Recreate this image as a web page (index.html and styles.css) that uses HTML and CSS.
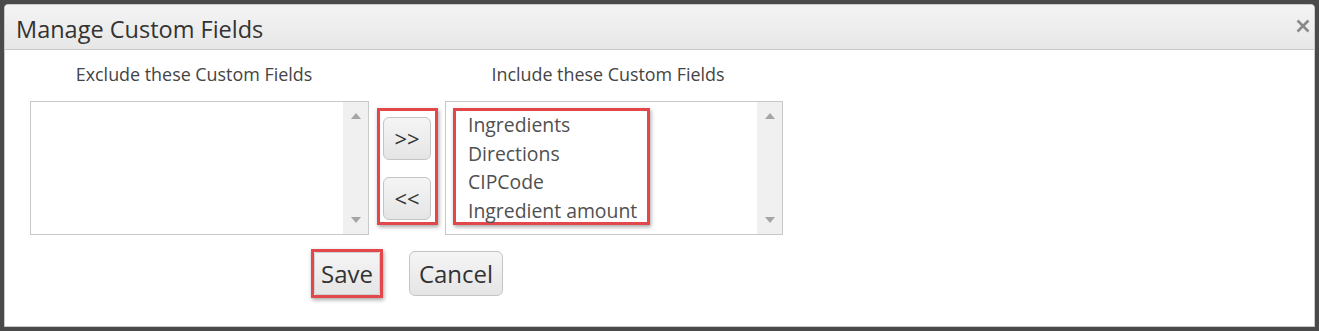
FILE: index.html
```html
<!DOCTYPE html>
<html lang="en">
<head>
<meta charset="utf-8">
<title>Manage Custom Fields</title>
<link rel="stylesheet" href="styles.css">
</head>
<body>
<div class="dialog">
  <div class="titlebar">
    <span class="title">Manage Custom Fields</span>
    <svg class="close" width="14" height="14" viewBox="0 0 14 14" aria-label="Close"><path d="M1.5 1.5 L12.5 12.5 M12.5 1.5 L1.5 12.5" stroke="#8a8a8a" stroke-width="2.6" stroke-linecap="butt"/></svg>
  </div>
  <div class="content">
    <div class="columns">
      <div class="label">Exclude these Custom Fields</div>
      <div></div>
      <div class="label">Include these Custom Fields</div>

      <div class="listbox">
        <div class="list-items"></div>
        <div class="scrollbar"><span class="arrow-up"></span><span class="arrow-down"></span></div>
      </div>
      <div class="move-col">
        <div class="highlight move-box">
          <button class="btn move">&gt;&gt;</button>
          <button class="btn move">&lt;&lt;</button>
        </div>
      </div>
      <div class="listbox">
        <div class="list-items">
          <div class="highlight items-box">
            <div class="item">Ingredients</div>
            <div class="item">Directions</div>
            <div class="item">CIPCode</div>
            <div class="item">Ingredient amount</div>
          </div>
        </div>
        <div class="scrollbar"><span class="arrow-up"></span><span class="arrow-down"></span></div>
      </div>
    </div>
    <div class="actions">
      <div class="highlight save-box"><button class="btn save">Save</button></div>
      <button class="btn cancel">Cancel</button>
    </div>
  </div>
</div>
</body>
</html>
```

FILE: styles.css
```css
* { box-sizing: border-box; }
html, body { margin: 0; }
body {
  width: 1319px;
  height: 331px;
  background: #4a4a4a;
  padding: 4px 4px 4px 4px;
  font-family: "Open Sans", "DejaVu Sans", sans-serif;
  overflow: hidden;
}
.dialog {
  height: 323px;
  background: #fff;
  border: 1px solid #c9c9c9;
  border-radius: 4px 4px 0 0;
}
.titlebar {
  height: 45px;
  background: linear-gradient(#f4f4f4, #e7e7e7);
  border-bottom: 1px solid #c6c6c6;
  border-radius: 3px 3px 0 0;
  display: flex;
  align-items: center;
  justify-content: space-between;
  padding: 0 4px 0 11px;
}
.title {
  font-size: 23.5px;
  color: #333;
  line-height: 30px;
  padding-top: 3px;
}
.close { display: block; margin-top: -2px; }
.content {
  padding: 13px 0 0 25px;
}
.columns {
  display: grid;
  grid-template-columns: 340px 61px 338px;
  column-gap: 7px;
  row-gap: 16px;
  align-items: start;
}
.label {
  font-size: 17.9px;
  line-height: 22px;
  color: #444;
  text-align: center;
  padding-right: 12px;
}
.listbox {
  width: 339px;
  height: 134px;
  border: 1px solid #c8c8c8;
  display: flex;
}
.columns > .listbox:last-child { width: 338px; }
.list-items {
  flex: 1;
  padding: 6px 0 0 7px;
}
.scrollbar {
  width: 25px;
  background: #f0f0f0;
  display: flex;
  flex-direction: column;
  align-items: center;
  justify-content: space-between;
  padding: 11px 0 11px 1px;
}
.arrow-up, .arrow-down {
  width: 0; height: 0;
  border-left: 5px solid transparent;
  border-right: 5px solid transparent;
}
.arrow-up { border-bottom: 6px solid #a5a5a5; }
.arrow-down { border-top: 6px solid #a5a5a5; }

.highlight {
  border: 3px solid #e2474b;
  box-shadow: 1px 2px 4px rgba(0,0,0,0.35);
}
.move-col { padding-top: 7px; }
.move-box {
  width: 61px;
  height: 117px;
  padding: 6px 4px 2px 3px;
  display: flex;
  flex-direction: column;
  gap: 17px;
}
.btn {
  font-family: "Open Sans", "DejaVu Sans", sans-serif;
  color: #333;
  background: linear-gradient(#f5f5f5, #e5e5e5);
  border: 1px solid #c4c4c4;
  border-radius: 6px;
  padding: 0;
  margin: 0;
}
.move {
  width: 48px;
  height: 43px;
  font-size: 22px;
  line-height: 24px;
  padding-bottom: 2px;
}
.items-box {
  width: 197px;
  height: 117px;
  padding: 0 0 0 12px;
}
.item {
  font-size: 19.4px;
  line-height: 28.6px;
  color: #505050;
  white-space: nowrap;
  margin-top: 0;
}
.actions {
  display: flex;
  align-items: center;
  padding-left: 281px;
  margin-top: 14px;
}
.save-box {
  width: 72px;
  height: 49px;
  display: flex;
}
.save {
  flex: 1;
  border-radius: 2px;
  border-color: #d0d0d0;
  font-size: 24px;
}
.cancel {
  margin-left: 26px;
  width: 94px;
  height: 45px;
  font-size: 24px;
}
```
